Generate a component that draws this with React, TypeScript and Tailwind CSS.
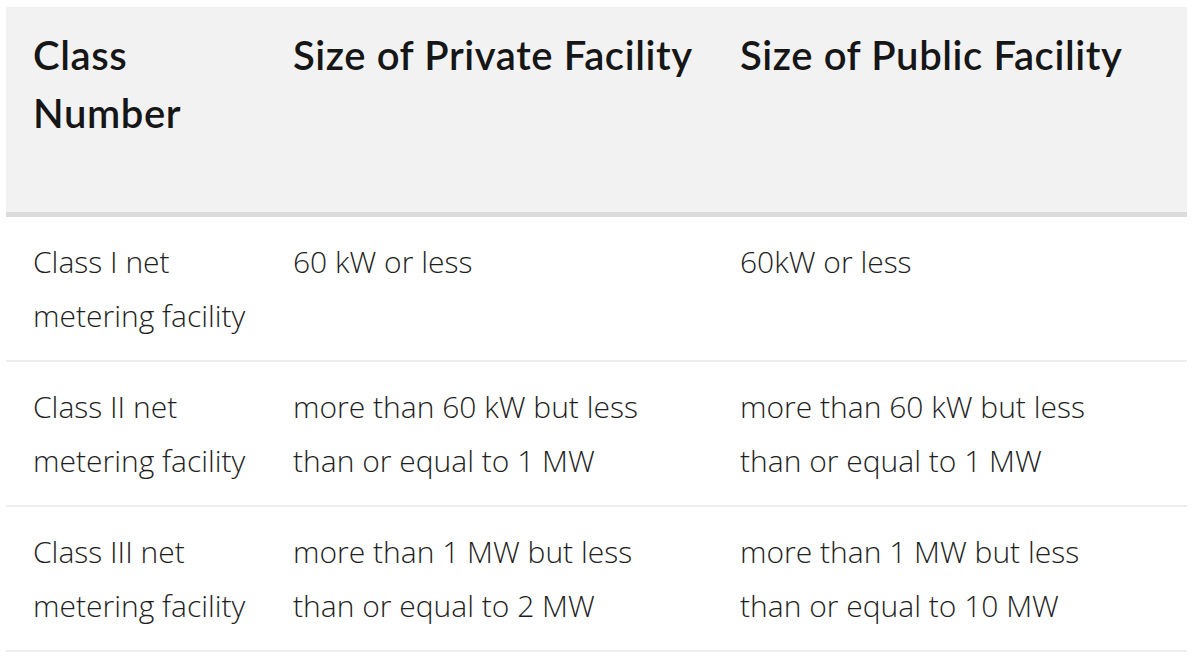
import React from "react";

const rows = [
  ["Class I net metering facility", "60 kW or less", "60kW or less"],
  [
    "Class II net metering facility",
    "more than 60 kW but less than or equal to 1 MW",
    "more than 60 kW but less than or equal to 1 MW",
  ],
  [
    "Class III net metering facility",
    "more than 1 MW but less than or equal to 2 MW",
    "more than 1 MW but less than or equal to 10 MW",
  ],
];

export default function App() {
  return (
    <div className="w-[1200px] h-[657px] bg-white pt-[7px] pl-[6px]" style={{ fontFamily: "Lato, 'Noto Sans', sans-serif" }}>
      <table className="w-[1181px] border-collapse table-fixed">
        <colgroup>
          <col className="w-[260px]" />
          <col className="w-[447px]" />
          <col className="w-[474px]" />
        </colgroup>
        <thead>
          <tr className="bg-[#f2f2f2] border-b-[5px] border-[#dcdcdc]">
            {["Class Number", "Size of Private Facility", "Size of Public Facility"].map((h) => (
              <th
                key={h}
                className="text-left align-top pl-[27px] pr-[10px] pt-[19px] pb-[70px] text-[40px] leading-[58px] font-semibold tracking-[0.6px] text-[#161616]"
              >
                {h}
              </th>
            ))}
          </tr>
        </thead>
        <tbody>
          {rows.map((r, i) => (
            <tr key={i} className="border-b-2 border-[#eeeeee]">
              {r.map((c, j) => (
                <td
                  key={j}
                  className={`align-top pl-[27px] ${j === 0 ? "pr-[4px]" : "pr-[40px]"} pt-[18px] pb-[17px] text-[30px] leading-[54px] font-light text-[#1e1e1e] font-['Open_Sans',sans-serif]`}
                >
                  {c}
                </td>
              ))}
            </tr>
          ))}
        </tbody>
      </table>
    </div>
  );
}
